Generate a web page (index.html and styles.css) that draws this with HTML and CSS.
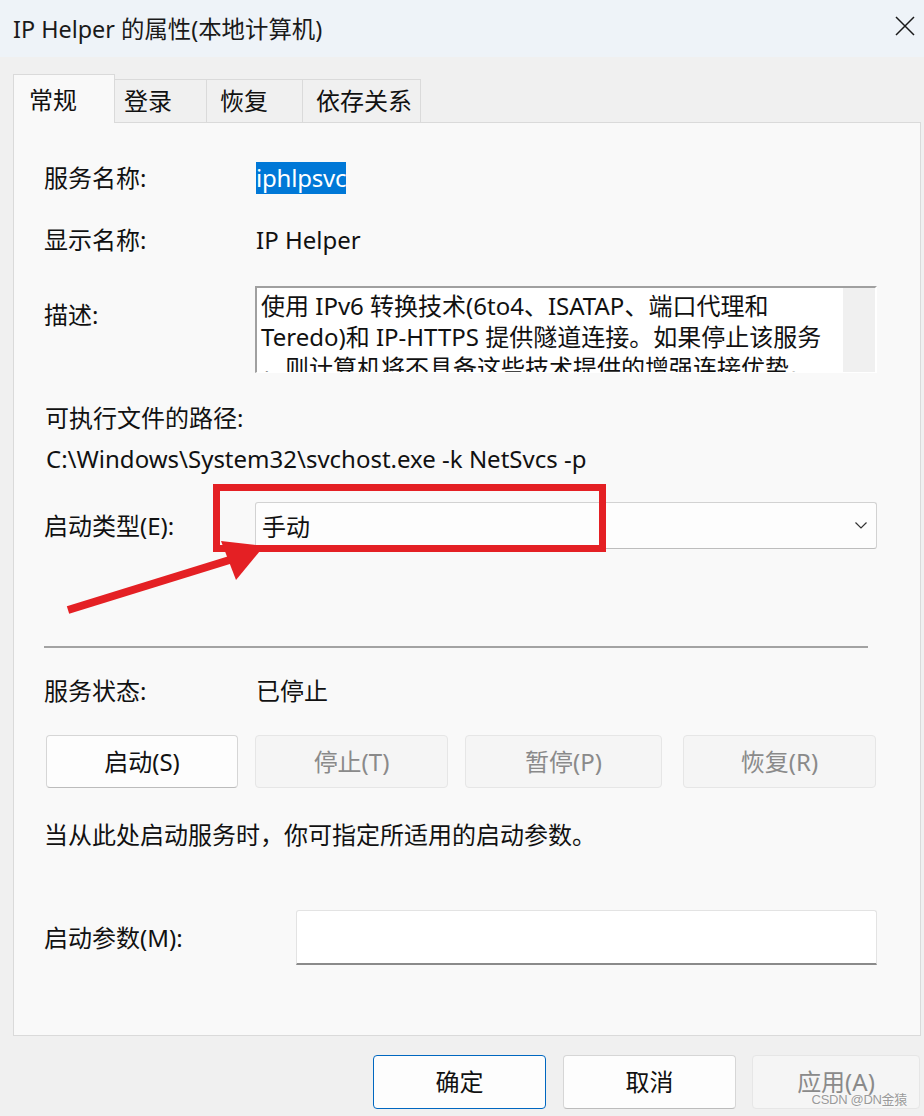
FILE: index.html
```html
<!DOCTYPE html>
<html lang="zh-CN">
<head>
<meta charset="utf-8">
<title>IP Helper 的属性(本地计算机)</title>
<link rel="stylesheet" href="styles.css">
</head>
<body>
<div class="dialog">
  <div class="titlebar">
    <span class="title">IP Helper 的属性(本地计算机)</span>
    <svg class="close" width="20" height="20" viewBox="0 0 20 20"><path d="M1 1 L19 19 M19 1 L1 19" stroke="#1a1a1a" stroke-width="1.5" fill="none"/></svg>
  </div>
  <div class="client">
    <div class="tabs">
      <div class="tab active">常规</div>
      <div class="tab t2">登录</div>
      <div class="tab t3">恢复</div>
      <div class="tab t4">依存关系</div>
    </div>
    <div class="panel">
      <div class="row r1">
        <span class="label">服务名称:</span>
        <span class="value"><span class="sel">iphlpsvc</span></span>
      </div>
      <div class="row r2">
        <span class="label">显示名称:</span>
        <span class="value">IP Helper</span>
      </div>
      <div class="row r3">
        <span class="label desc-label">描述:</span>
        <div class="descbox">
          <div class="desctext">使用 IPv6 转换技术(6to4、ISATAP、端口代理和<br>Teredo)和 IP-HTTPS 提供隧道连接。如果停止该服务<br>，则计算机将不具备这些技术提供的增强连接优势。</div>
          <div class="scroll"></div>
        </div>
      </div>
      <div class="line r4">可执行文件的路径:</div>
      <div class="line r5">C:\Windows\System32\svchost.exe -k NetSvcs -p</div>
      <div class="row r6">
        <span class="label">启动类型(E):</span>
        <div class="combo">
          <span>手动</span>
          <svg class="chev" width="12" height="7" viewBox="0 0 12 7"><path d="M0.5 0.5 L6 6 L11.5 0.5" stroke="#333" stroke-width="1.2" fill="none"/></svg>
        </div>
      </div>
      <div class="sep"></div>
      <div class="row r7">
        <span class="label">服务状态:</span>
        <span class="value">已停止</span>
      </div>
      <div class="btnrow">
        <button class="btn b1">启动(S)</button>
        <button class="btn b2 disabled">停止(T)</button>
        <button class="btn b3 disabled">暂停(P)</button>
        <button class="btn b4 disabled">恢复(R)</button>
      </div>
      <div class="line r8">当从此处启动服务时，你可指定所适用的启动参数。</div>
      <div class="row r9">
        <span class="label">启动参数(M):</span>
        <div class="param"></div>
      </div>
    </div>
    <div class="footer">
      <button class="fbtn ok">确定</button>
      <button class="fbtn">取消</button>
      <button class="fbtn apply disabled">应用(A)</button>
    </div>
  </div>
  <div class="redbox"></div>
  <svg class="arrow" width="924" height="1116" viewBox="0 0 924 1116">
    <line x1="68" y1="610" x2="236" y2="558" stroke="#e42024" stroke-width="8"/>
    <polygon points="221,541 264,546 236,580" fill="#e42024"/>
  </svg>
  <div class="watermark">CSDN @DN金猿</div>
</div>
</body>
</html>
```
FILE: styles.css
```css
* { box-sizing: border-box; }
html, body { margin: 0; padding: 0; }
body {
  font-family: "Noto Sans", "Noto Sans CJK SC", sans-serif;
  font-size: 24px;
  color: #111;
  background: #f0f0f0;
}
.dialog {
  position: relative;
  width: 924px;
  height: 1116px;
  overflow: hidden;
  background: #f0f0f0;
}
.titlebar {
  height: 57px;
  background: #eef3f8;
  display: flex;
  align-items: center;
  justify-content: space-between;
  padding: 0 9px 0 13px;
}
.title {
  font-size: 23.4px;
  line-height: 30px;
  color: #1a1a1a;
  padding-top: 1px;
}
.close { margin-top: -5px; }
.client {
  padding-top: 17px;
}
.tabs {
  display: flex;
  align-items: flex-end;
  padding-left: 13px;
  height: 48px;
  position: relative;
  z-index: 2;
}
.tab {
  height: 43px;
  border: 1px solid #dadada;
  border-bottom: none;
  border-left: none;
  background: #f0f0f0;
  line-height: 42px;
  padding-left: 13px;
  color: #111;
}
.tab.active {
  height: 49px;
  margin-bottom: -1px;
  border-left: 1px solid #dadada;
  background: #f9f9f9;
  width: 102px;
  padding-left: 15px;
  line-height: 50px;
}
.tab.t2 { width: 92px; padding-left: 9px; }
.tab.t3 { width: 96px; }
.tab.t4 { width: 118px; }
.panel {
  margin-left: 13px;
  width: 908px;
  height: 914px;
  border: 1px solid #dadada;
  background: #f9f9f9;
  padding: 39px 0 0 30px;
}
.row {
  display: flex;
  align-items: center;
}
.label {
  width: 212px;
  flex: none;
  line-height: 32px;
}
.value { line-height: 32px; }
.sel {
  background: #0078d7;
  color: #fff;
  display: inline-block;
  line-height: 32px;
  letter-spacing: -0.2px;
}
.r2 { margin-top: 30px; }
.r3 { margin-top: 30px; align-items: flex-start; }
.desc-label { padding-top: 13px; }
.descbox {
  margin-left: -1px;
  width: 622px;
  height: 87px;
  display: flex;
  border-top: 2px solid #a0a0a0;
  border-left: 2px solid #a0a0a0;
  border-right: 2px solid #fff;
  border-bottom: 1px solid #fff;
  background: #fff;
  overflow: hidden;
}
.desctext {
  flex: 1;
  white-space: nowrap;
  line-height: 31px;
  padding: 2px 0 0 4px;
  overflow: hidden;
}
.scroll {
  width: 32px;
  flex: none;
  background: #f0f0f0;
}
.line {
  line-height: 32px;
  white-space: nowrap;
}
.r4 { margin-top: 29px; padding-left: 1px; }
.r5 { margin-top: 9px; padding-left: 2px; }
.r6 { margin-top: 27px; }
.combo {
  margin-left: -1px;
  width: 622px;
  height: 47px;
  background: #fdfdfd;
  border: 1px solid #d2d2d2;
  border-bottom-color: #bdbdbd;
  border-radius: 3px;
  display: flex;
  align-items: center;
  justify-content: space-between;
  padding: 0 9px 0 6px;
}
.sep {
  margin-top: 97px;
  width: 824px;
  height: 2px;
  background: #a3a3a3;
}
.r7 { margin-top: 27px; }
.btnrow {
  margin-top: 28px;
  display: flex;
  gap: 17px;
  padding-left: 2px;
}
.btn, .fbtn {
  font-family: inherit;
  font-size: 24px;
  height: 53px;
  border: 1px solid #d6d6d6;
  border-bottom-color: #bcbcbc;
  border-radius: 4px;
  background: #fdfdfd;
  color: #111;
  padding: 0;
  line-height: 1;
}
.b1 { width: 192px; }
.b2 { width: 193px; }
.b3 { width: 197px; }
.b4 { width: 193px; margin-left: 4px; }
.btn.disabled, .fbtn.disabled {
  background: #f5f5f5;
  border: 1px solid #e6e6e6;
  color: #8a8a8a;
}
.r8 { margin-top: 31px; }
.r9 { margin-top: 59px; }
.param {
  margin-left: 40px;
  width: 581px;
  height: 55px;
  background: #fff;
  border: 1px solid #e3e3e3;
  border-bottom: 2px solid #8a8a8a;
  border-radius: 3px 3px 0 0;
}
.footer {
  display: flex;
  justify-content: flex-end;
  gap: 17px;
  padding: 19px 4px 0 0;
}
.fbtn { width: 173px; height: 54px; }
.fbtn.ok { border: 1px solid #0067c0; }
.fbtn.apply { width: 168px; margin-left: -1px; }
.redbox {
  position: absolute;
  left: 213px;
  top: 484px;
  width: 393px;
  height: 68px;
  border: 7px solid #e42024;
}
.arrow {
  position: absolute;
  left: 0;
  top: 0;
}
.watermark {
  position: absolute;
  right: 17px;
  bottom: 8px;
  font-family: "Liberation Sans", "Noto Sans CJK SC", sans-serif;
  font-size: 13px;
  letter-spacing: -0.3px;
  color: #9a9a9a;
  text-shadow: 0 0 2px #fff;
  line-height: 16px;
}
```
